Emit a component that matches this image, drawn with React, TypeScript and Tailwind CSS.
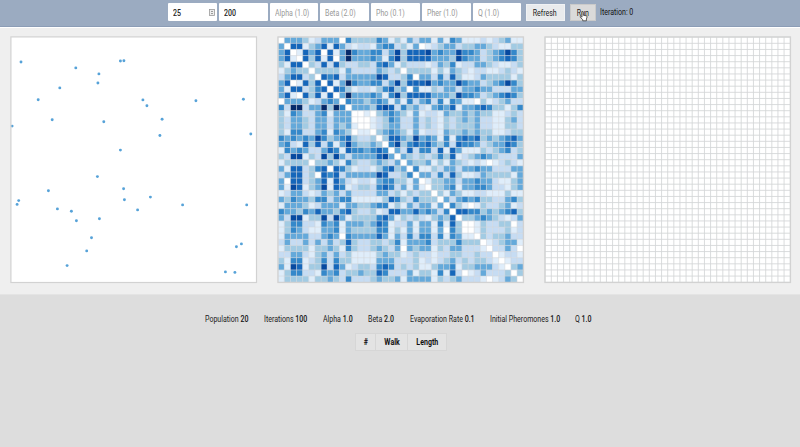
import React from "react";

type City = [number, number];

const cities: City[] = [
  [99, 218.4], [97.5, 82.6], [234.5, 272], [236, 246.4], [51.8, 119.4], [123.2, 188.3], [18.3, 200.2], [225, 271.5],
  [120, 60.6], [241, 243.5], [91.1, 237.3], [20.6, 61.6], [146.5, 105.3], [161.7, 118.9], [159.5, 135.1], [142.5, 99.5],
  [243, 98.9], [246.3, 204.5], [66.7, 265.2], [11.7, 125.7], [124, 199.3], [123.5, 60.4], [16.7, 204], [98.5, 73.5],
  [75.4, 67.5], [97, 176.2], [195.5, 100.3], [76, 220.3], [250.4, 133.6], [37.8, 99.4], [57, 208.5], [71, 210.9],
  [86.3, 250.5], [182.2, 204.5], [137.2, 209.5], [120, 149.7], [103.4, 121.4], [59.4, 87.5], [48, 190.4], [150, 196.7],
];

const scale = ["#ffffff", "#dfedfa", "#c6dcf3", "#a2cbe3", "#64a9da", "#3488ca", "#1566ba", "#0649a0", "#062a6a"];

const distance = (a: City, b: City) => Math.hypot(a[0] - b[0], a[1] - b[1]);
const lengths = cities.flatMap((a, i) => cities.slice(i + 1).map((b) => distance(a, b)));
const shortest = Math.min(...lengths);
const longest = Math.max(...lengths);
const level = (d: number) => Math.max(0, Math.round(((d - shortest) / (longest - shortest)) * 8));

const size = 245.6;
const pitch = 6.125;
const ticks = Array.from({ length: 41 }, (_, i) => i);

function Panel({ children }: { children: React.ReactNode }) {
  return (
    <svg width={248} height={248} viewBox="0 0 248 248" className="block shrink-0">
      <rect x={0.9} y={0.9} width={size} height={size} fill="#fff" />
      {children}
      <rect x={0.9} y={0.9} width={size} height={size} fill="none" stroke="#d2d2d2" strokeWidth={1.2} />
    </svg>
  );
}

function Lines({ color, width }: { color: string; width: number }) {
  return (
    <path
      d={ticks.map((i) => `M${1.2 + i * pitch} 1V246M1 ${1.2 + i * pitch}H246`).join("")}
      stroke={color}
      strokeWidth={width}
      fill="none"
    />
  );
}

function Narrow({ children, center }: { children: React.ReactNode; center?: boolean }) {
  return (
    <span
      className={`inline-block scale-x-[0.765] text-[9.2px] whitespace-nowrap ${center ? "origin-center" : "origin-left"}`}
    >
      {children}
    </span>
  );
}

function Field({ value, hint, spinner }: { value?: string; hint?: string; spinner?: boolean }) {
  return (
    <div className="flex h-[18px] w-[48.75px] shrink-0 items-center justify-between rounded-[1px] bg-white pr-[2px] pl-[5px]">
      <Narrow>
        {value ? <span className="font-medium text-[#222]">{value}</span> : <span className="text-[#999]">{hint}</span>}
      </Narrow>
      {spinner && (
        <svg width="6" height="7" viewBox="0 0 6 7" className="shrink-0">
          <rect x="0.5" y="0.5" width="5" height="6" fill="#eee" stroke="#999" strokeWidth="0.8" />
          <path d="M3 1.8L4 3H2zM3 5.2L2 4h2z" fill="#666" />
        </svg>
      )}
    </div>
  );
}

const stats: [string, string, string][] = [
  ["Population", "20", "w-[42px]"],
  ["Iterations", "100", "w-[42.5px]"],
  ["Alpha", "1.0", "w-[29px]"],
  ["Beta", "2.0", "w-[25.5px]"],
  ["Evaporation Rate", "0.1", "w-[63.5px]"],
  ["Initial Pheromones", "1.0", "w-[68.5px]"],
  ["Q", "1.0", "w-[17px]"],
];

export default function App() {
  return (
    <div className="h-[447px] w-[800px] overflow-hidden bg-[#dddddd] font-['Roboto',sans-serif] text-[9.2px] leading-[11px] text-[#222]">
      <header className="flex h-[27px] items-start gap-[2px] border-b border-[#8c9db6] bg-[#9babc1] pt-[3px] pl-[168px]">
        <Field value="25" spinner />
        <Field value="200" />
        <Field hint="Alpha (1.0)" />
        <Field hint="Beta (2.0)" />
        <Field hint="Pho (0.1)" />
        <Field hint="Pher (1.0)" />
        <Field hint="Q (1.0)" />
        <button className="mt-[0.5px] ml-[2.3px] flex h-[17px] w-[39px] shrink-0 items-center justify-center border border-[#f0f2f4] bg-[#e9ebed]">
          <Narrow center>Refresh</Narrow>
        </button>
        <button className="relative mt-[0.5px] ml-[3px] flex h-[17px] w-[26.5px] shrink-0 items-center justify-center border border-[#cacaca] bg-[#dadada]">
          <Narrow center>Run</Narrow>
          <svg className="absolute top-[6px] left-[8px]" width="9" height="11" viewBox="0 0 9 11">
            <path
              d="M3 6.2V1.4c0-1 1.3-1 1.3 0v2.8l3 .6c.6.2.8.5.8 1.1L7.4 8v1.8H3.7V8.6L1.2 6.2c-.4-.7.4-1.2 1-.7z"
              fill="#fff"
              stroke="#222"
              strokeWidth="0.7"
            />
          </svg>
        </button>
        <div className="ml-[2px] pt-[3px] text-[#111]">
          <Narrow>Iteration: 0</Narrow>
        </div>
      </header>

      <main className="flex h-[267.5px] gap-[19px] border-t border-b border-t-white border-b-[#e4e4e4] bg-[#efefef] pt-[8px] pl-[10px]">
        <Panel>
          {cities.map(([x, y], i) => (
            <circle key={i} cx={x - 9.6} cy={y - 35.6} r={1.45} fill="#56a2d8" />
          ))}
        </Panel>
        <Panel>
          {cities.map((a, r) =>
            cities.map((b, c) => (
              <rect
                key={`${r}-${c}`}
                x={1.2 + c * pitch}
                y={1.2 + r * pitch}
                width={pitch}
                height={pitch}
                fill={scale[r === c ? 0 : level(distance(a, b))]}
              />
            )),
          )}
          <Lines color="#cfd3d8" width={0.55} />
        </Panel>
        <Panel>
          <Lines color="#d3d6d7" width={0.85} />
        </Panel>
      </main>

      <section className="flex flex-col items-center">
        <div className="mr-[3px] flex gap-[16.5px] pt-[18.5px]">
          {stats.map(([name, value, width]) => (
            <div key={name} className={width}>
              <Narrow>
                {name} <b className="font-medium text-[#111]">{value}</b>
              </Narrow>
            </div>
          ))}
        </div>
        <div className="mt-[8.5px] mr-[-2px] flex h-[18px] divide-x divide-[#d6d6d6] border border-[#d6d6d6] bg-[#e3e3e3] text-center leading-[16px] font-bold text-[#111]">
          <span className="flex w-[20px] justify-center"><Narrow center>#</Narrow></span>
          <span className="flex w-[32px] justify-center"><Narrow center>Walk</Narrow></span>
          <span className="flex w-[37.5px] justify-center"><Narrow center>Length</Narrow></span>
        </div>
      </section>
    </div>
  );
}
